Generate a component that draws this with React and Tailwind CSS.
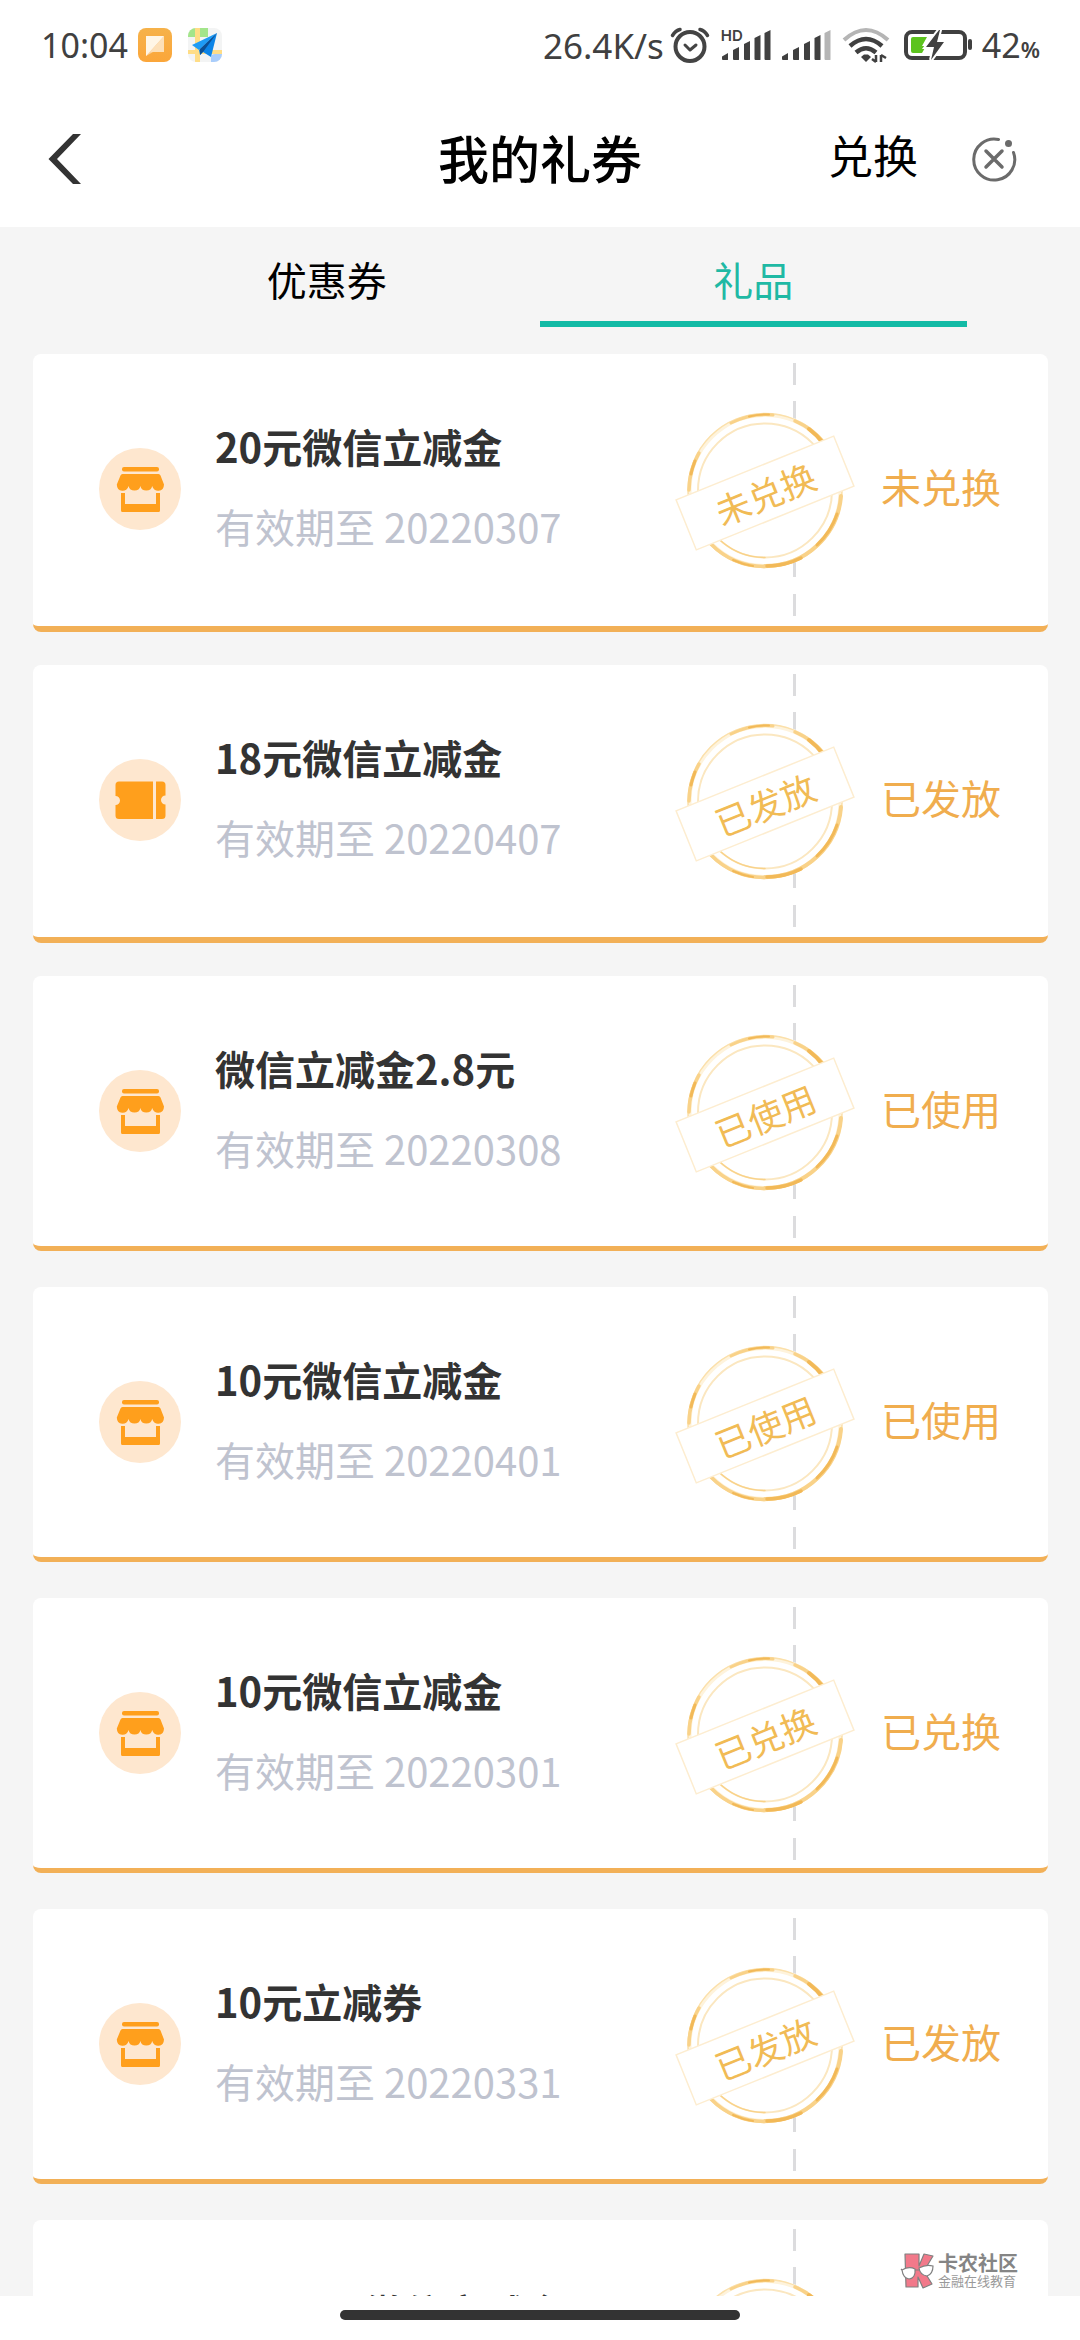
const COUPONS = [
  { title: '20元微信立减金', date: '20220307', status: '未兑换', icon: 'shop', thick: true },
  { title: '18元微信立减金', date: '20220407', status: '已发放', icon: 'ticket', thick: true },
  { title: '微信立减金2.8元', date: '20220308', status: '已使用', icon: 'shop' },
  { title: '10元微信立减金', date: '20220401', status: '已使用', icon: 'shop' },
  { title: '10元微信立减金', date: '20220301', status: '已兑换', icon: 'shop' },
  { title: '10元立减券', date: '20220331', status: '已发放', icon: 'shop' },
  { title: '10-20元微信立减金', date: '20220331', status: '已兑换', icon: 'shop' },
];

function NotesAppIcon() {
  return (
    <svg className="size-[34px]" viewBox="0 0 34 34" aria-hidden="true">
      <defs>
        <linearGradient id="notesBg" x1="0" y1="0" x2="0" y2="1">
          <stop offset="0" stopColor="#f6b24a" />
          <stop offset="1" stopColor="#fba63a" />
        </linearGradient>
      </defs>
      <rect width="34" height="34" rx="8" fill="url(#notesBg)" />
      <path d="M8 8h18v16l-11 0-7 4z" fill="#fbd09a" />
      <path d="M8 8h18L8 28z" fill="#fff6e6" />
      <path d="M26 8v16H12z" fill="#fde0b8" />
    </svg>
  );
}

function MapAppIcon() {
  return (
    <svg className="size-[34px]" viewBox="0 0 34 34" aria-hidden="true">
      <defs>
        <clipPath id="mapClip">
          <rect width="34" height="34" rx="8" />
        </clipPath>
      </defs>
      <g clipPath="url(#mapClip)">
        <rect width="34" height="34" fill="#f3f4f4" />
        <path d="M0 0h20v9H0z" fill="#a3e58b" />
        <path d="M7 0h5v34H7zM0 22h34v4H0z" fill="#ffdd86" />
        <path d="M23 34v-4q0-4 4-4h7v8z" fill="#a9cdfb" />
      </g>
      <path d="M29 5 4 17l7 5z" fill="#1d9bf5" />
      <path d="M29 5 11 22l1 5 3-3 8 5z" fill="#0b84e8" />
      <path d="M29 5 12 21v6l3-3z" fill="#0b4f94" />
    </svg>
  );
}

function AlarmIcon() {
  return (
    <svg className="h-9 w-10" viewBox="0 0 40 36" fill="none" stroke="#444" strokeLinecap="round" aria-hidden="true">
      <circle cx="20" cy="19.5" r="14.5" strokeWidth="4" />
      <path d="m15 18 5 5 6-5" strokeWidth="3" strokeLinejoin="round" />
      <path d="M2.500 8.500Q5.500 3.500 10 2.500M37.500 8.500Q34.500 3.500 30 2.500" strokeWidth="3.500" />
    </svg>
  );
}

function SignalBars({ weak }) {
  return (
    <svg className="h-8 w-[50px]" viewBox="0 0 50 32" fill="#404040" aria-hidden="true">
      <path d="M1 27.500 7 24v6.500q0 .5-1 .5H2q-1 0-1-1z" />
      <path d="m12 21 6-3v12.500q0 .5-1 .5h-4q-1 0-1-1z" />
      <path d="m23 15 6-3v18.500q0 .5-1 .5h-4q-1 0-1-1z" />
      <path d="m33.500 9 6-3v24.500q0 .5-1 .5h-4q-1 0-1-1z" />
      <path d="m43.500 4 6-3v29.500q0 .5-1 .5h-4q-1 0-1-1z" fill={weak ? '#b5b5b5' : '#404040'} />
    </svg>
  );
}

function WifiIcon() {
  return (
    <svg className="h-9 w-12" viewBox="0 0 48 36" fill="none" aria-hidden="true">
      <path d="M2 13Q24-7 46 13" stroke="#b5b5b5" strokeWidth="4" />
      <path d="M8 19Q24 5 40 19" stroke="#404040" strokeWidth="4.500" />
      <path d="M14 25.500Q24 17 34 25.500" stroke="#404040" strokeWidth="4.500" />
      <path d="m19 30 3-2.500h4l3 2.500-5 5z" fill="#404040" />
      <path d="M34 28v7M34 35l-4-3M39 35v-7M39 28l5 3" stroke="#404040" strokeWidth="2.500" />
    </svg>
  );
}

function BatteryIcon() {
  return (
    <svg className="h-8 w-[68px]" viewBox="0 0 68 32" fill="none" aria-hidden="true">
      <rect x="2" y="3" width="59" height="26" rx="6" stroke="#404040" strokeWidth="4" />
      <rect x="64" y="10" width="4" height="11" rx="2" fill="#404040" />
      <path d="M9 8h14l-5 9h4l-4 7H9q-2 0-2-2V10q0-2 2-2z" fill="#5cc31e" />
      <path
        d="M35 1 22 18h8l-3 13 13-18h-7L36 1z"
        fill="#404040"
        stroke="#fff"
        strokeWidth="4"
        paintOrder="stroke"
      />
    </svg>
  );
}

function StatusBar() {
  return (
    <div className="flex h-[90px] items-center justify-between pr-10 pl-[41px] font-['Noto_Sans'] text-[34px] leading-none text-[#404040]">
      <div className="flex items-center">
        <span className="w-[97px]">10:04</span>
        <NotesAppIcon />
        <span className="w-4" />
        <MapAppIcon />
      </div>
      <div className="flex items-center">
        <span className="mr-[6px] text-[35px]">26.4K/s</span>
        <AlarmIcon />
        <div className="relative ml-[11px]">
          <SignalBars />
          <span className="absolute -top-px left-0 font-['Inter'] text-[15px] leading-none font-semibold">HD</span>
        </div>
        <div className="ml-[10px]">
          <SignalBars weak />
        </div>
        <div className="ml-[11px]">
          <WifiIcon />
        </div>
        <div className="mr-[10px] ml-[14px]">
          <BatteryIcon />
        </div>
        <span className="flex items-baseline">
          42<span className="text-[22px] font-semibold">%</span>
        </span>
      </div>
    </div>
  );
}

function Header() {
  return (
    <header className="grid h-[137px] grid-cols-[1fr_auto_1fr] items-center px-[46px] text-black">
      <button type="button" aria-label="返回" className="justify-self-start">
        <svg className="h-[50px] w-9" viewBox="0 0 36 50" aria-hidden="true">
          <path d="M27 0h8L11 25l24 25h-8L2.500 25z" fill="#333" />
        </svg>
      </button>
      <h1 className="pb-1 text-[51px] leading-[60px] font-medium">我的礼券</h1>
      <div className="flex items-center justify-end gap-[52px] pr-4">
        <button type="button" className="pb-2 text-[45px] leading-[60px]">兑换</button>
        <button type="button" aria-label="关闭">
          <svg className="size-12" viewBox="0 0 48 48" fill="none" stroke="#6b6b6b" strokeLinecap="round" aria-hidden="true">
            <path d="M28.500 4.500A20.500 20.500 0 1 0 43.500 17.500" strokeWidth="3" />
            <path d="m16 16 16 16M32 16 16 32" strokeWidth="3.500" />
            <circle cx="38.500" cy="8.500" r="3.500" fill="#6b6b6b" stroke="none" />
          </svg>
        </button>
      </div>
    </header>
  );
}

function Tabs() {
  const base = 'h-[100px] flex-1 border-b-[6px] pt-[10px] text-[40px] leading-[60px]';
  return (
    <div role="tablist" className="mx-auto flex w-[79%]">
      <button type="button" role="tab" aria-selected="false" className={`${base} border-transparent text-black`}>
        优惠券
      </button>
      <button type="button" role="tab" aria-selected="true" className={`${base} border-[#13bba6] text-[#1fb9a4]`}>
        礼品
      </button>
    </div>
  );
}

function CouponIcon({ type }) {
  return (
    <svg className="size-[82px] shrink-0" viewBox="0 0 82 82" aria-hidden="true">
      <circle cx="41" cy="41" r="41" fill="#fee7cf" />
      {type === 'shop' ? (
        <g fill="#ff9f1c">
          <rect x="23" y="19" width="37" height="4.500" rx="2" />
          <path d="M23.500 26h36q1.500 0 2 1.500L65 36.500a6 6.500 0 0 1-11.800 1.500a6 5.500 0 0 1-11.800 0a6 5.500 0 0 1-11.800 0a6 6.500 0 0 1-11.800-1.500l3.700-9Q22 26 23.500 26z" />
          <path d="M22 45h4v11h31V45h4v17.500q0 1.500-1.500 1.500h-36Q22 64 22 62.500z" />
        </g>
      ) : (
        <g fill="#ff9f1c">
          <path d="M20 22.500h34v37.500H20q-3.500 0-3.500-3.500V46a4.500 4.500 0 0 0 0-9V26q0-3.500 3.500-3.500z" />
          <path d="M57 22.500h6q3.500 0 3.500 3.500v10.500a4.500 4.500 0 0 0 0 9V56.500q0 3.500-3.500 3.500h-6z" />
        </g>
      )}
    </svg>
  );
}

function Stamp({ label }) {
  return (
    <svg className="absolute inset-y-0 right-[191px] my-auto h-[170px] w-[184px]" viewBox="0 0 184 170" fill="none" aria-hidden="true">
      <circle cx="92" cy="86.500" r="78" fill="#fff" />
      <circle cx="92" cy="86.500" r="75.500" stroke="#fef3dc" strokeWidth="4" />
      <circle cx="92" cy="86.500" r="77" stroke="#fbe0ab" strokeWidth="1.500" />
      <circle cx="92" cy="86.500" r="67" stroke="#fbe7c0" strokeWidth="2" />
      <g stroke="#f9d289" strokeLinecap="round">
        <path d="M58 19A76 76 0 0 1 100 11" strokeWidth="3" />
        <path d="M122 17A76 76 0 0 1 151 39" strokeWidth="3.500" />
        <path d="M16 86A76 76 0 0 1 26 49" strokeWidth="3.500" />
        <path d="M168 92A76 76 0 0 1 92 162" strokeWidth="4" />
        <path d="M92 162.500A76 76 0 0 1 38 140" strokeWidth="3.500" />
        <path d="M92 153.500A67 67 0 0 1 48 137" strokeWidth="1.500" />
      </g>
      <g stroke="#f2b958" strokeLinecap="round">
        <path d="M76 12.500A76 76 0 0 1 96 10.500" strokeWidth="2" />
        <path d="M136 25A75 75 0 0 1 150 39" strokeWidth="4" />
        <path d="M18 70A76 76 0 0 1 22 57" strokeWidth="3" />
        <path d="M164 110A76 76 0 0 1 144 141" strokeWidth="3" />
        <path d="M128 154A76 76 0 0 1 94 162" strokeWidth="3.500" />
        <path d="M80 162A76 76 0 0 1 60 156" strokeWidth="2" />
      </g>
      <g transform="rotate(-22 92 89)">
        <rect x="7" y="62" width="170" height="54" fill="#fff" stroke="#fdedd0" strokeWidth="1.500" />
        <text x="92" y="104" textAnchor="middle" fontSize="35" fill="#f1bb55">
          {label}
        </text>
      </g>
    </svg>
  );
}

function Coupon({ item }) {
  return (
    <li className="min-h-[311px]">
      <article
        className={`rounded-lg border-[#f2b057] bg-white ${item.thick ? 'border-b-[6px] pb-[2px]' : 'border-b-[5px]'}`}
      >
        <div className="relative flex min-h-[270px] items-center pl-[66px]">
          <CouponIcon type={item.icon} />
          <div className="ml-[34px] min-w-0 flex-1 pb-[6px] text-[40px] leading-[60px] whitespace-nowrap">
            <h2 className="font-bold text-[#333]">{item.title}</h2>
            <p className="mt-5 text-[#bfc3cf]">有效期至 {item.date}</p>
          </div>
          <div className="flex h-[253px] flex-col justify-between" aria-hidden="true">
            {[0, 1, 2, 3, 4, 5, 6].map((n) => (
              <span key={n} className="h-[22px] w-[3px] bg-[#dcdcde]" />
            ))}
          </div>
          <span className="pr-[47px] pb-[6px] pl-[85px] text-[40px] leading-[60px] text-[#f0ad4e]">{item.status}</span>
          <Stamp label={item.status} />
        </div>
      </article>
    </li>
  );
}

function Watermark() {
  return (
    <div className="absolute right-[62px] bottom-[7px] flex items-center gap-1 text-[#858585]">
      <svg className="h-9 w-[34px]" viewBox="0 0 34 36" aria-hidden="true">
        <g fill="#f2798a" stroke="#808080" strokeWidth="1.200" strokeLinejoin="round">
          <path d="M5 1h14v12l5-12 9 2-9 15 8 13-9 4-5-11v10H6z" />
        </g>
        <g fill="#fff" stroke="#808080" strokeWidth="1.200">
          <path d="M2 17q7-4 13-1 1 9-6 10-6-1-7-9z" />
          <path d="M19 15q7-4 14-2 0 8-6 10-7-1-8-8z" />
          <path d="m2 17-1-1M15 17h4" />
        </g>
      </svg>
      <div>
        <p className="text-[20px] leading-5 font-bold">卡农社区</p>
        <p className="text-[13px] leading-4 text-[#9a9a9a]">金融在线教育</p>
      </div>
    </div>
  );
}

export default function App() {
  return (
    <div className="flex h-screen flex-col overflow-hidden bg-white font-['Noto_Sans_CJK_SC',sans-serif]">
      <StatusBar />
      <Header />
      <main className="relative min-h-0 flex-1 overflow-hidden bg-[#f5f5f5]">
        <Tabs />
        <ul className="pt-[27px] pr-8 pl-[33px]">
          {COUPONS.map((item, i) => (
            <Coupon key={i} item={item} />
          ))}
        </ul>
        <Watermark />
      </main>
      <footer className="flex h-11 shrink-0 justify-center pt-[14px]">
        <div className="h-[10px] w-[37%] rounded-full bg-[#333]" />
      </footer>
    </div>
  );
}
